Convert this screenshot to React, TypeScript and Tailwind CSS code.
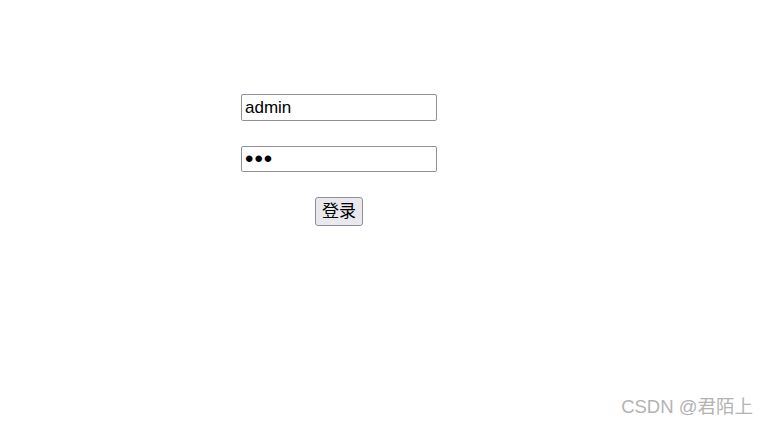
import React from "react";

export default function App() {
  return (
    <div className="relative w-[769px] h-[424px] bg-white" style={{ fontFamily: '"Liberation Sans", "Noto Sans CJK SC", sans-serif' }}>
      <div className="flex flex-col items-center w-[196px] ml-[241px] pt-[94px]">
        <input
          type="text"
          defaultValue="admin"
          className="w-[196px] h-[27px] border border-[#8f8f9d] rounded-[2px] px-[3px] text-[17px] text-black outline-none"
        />
        <input
          type="password"
          defaultValue="123"
          className="mt-[25px] w-[196px] h-[26px] border border-[#8f8f9d] rounded-[2px] px-[3px] text-[24px] leading-none tracking-[1px] text-black outline-none"
        />
        <button className="mt-[25px] w-[48px] h-[29px] border border-[#8f8f9d] rounded-[3px] bg-[#e9e9ed] text-[17px] text-black leading-none">
          登录
        </button>
      </div>
      <div className="absolute right-[16px] top-[393px] text-[18.5px] text-[#b3b3b3] whitespace-nowrap">
        CSDN @君陌上
      </div>
    </div>
  );
}
